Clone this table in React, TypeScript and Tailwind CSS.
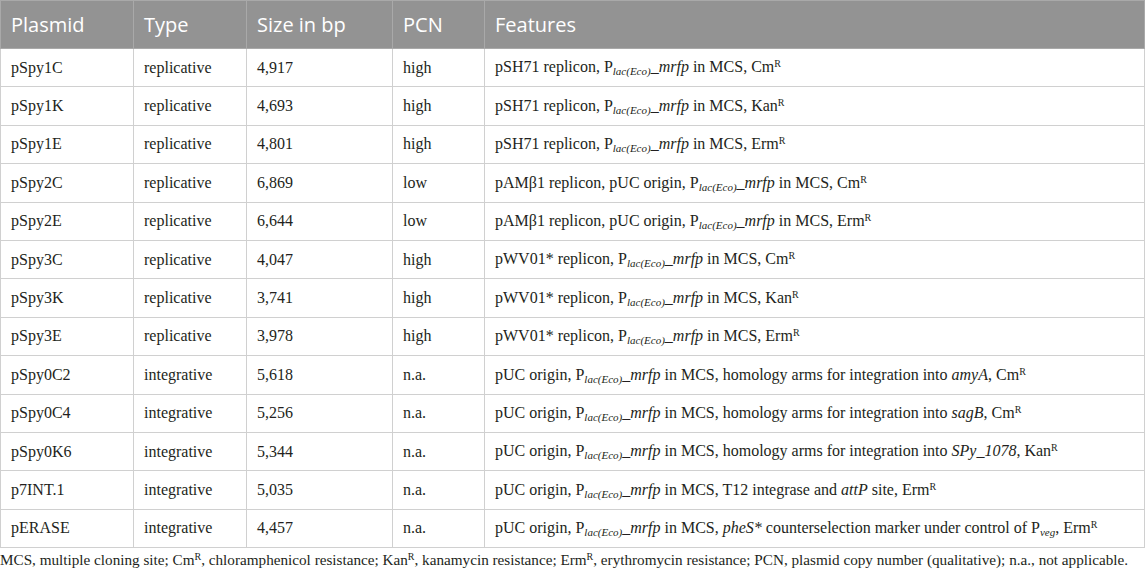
import type { ReactNode } from 'react';

type Row = { name: string; type: string; size: string; pcn: string; features: ReactNode };

// subscript / superscript as plain spans so preflight's sub/sup offsets don't apply
const Sub = ({ children }: { children: ReactNode }) => (
  <span className="italic text-[11px] align-[-3px]">{children}</span>
);

const P = () => (
  <>
    P<Sub>lac(Eco)</Sub>
    <i>_mrfp</i>
  </>
);

const R = ({ n }: { n: string }) => (
  <>
    {n}
    <span className="text-[10px] align-[5px] leading-none">R</span>
  </>
);

const ROWS: Row[] = [
  { name: 'pSpy1C', type: 'replicative', size: '4,917', pcn: 'high', features: <>pSH71 replicon, <P /> in MCS, <R n="Cm" /></> },
  { name: 'pSpy1K', type: 'replicative', size: '4,693', pcn: 'high', features: <>pSH71 replicon, <P /> in MCS, <R n="Kan" /></> },
  { name: 'pSpy1E', type: 'replicative', size: '4,801', pcn: 'high', features: <>pSH71 replicon, <P /> in MCS, <R n="Erm" /></> },
  { name: 'pSpy2C', type: 'replicative', size: '6,869', pcn: 'low', features: <>pAMβ1 replicon, pUC origin, <P /> in MCS, <R n="Cm" /></> },
  { name: 'pSpy2E', type: 'replicative', size: '6,644', pcn: 'low', features: <>pAMβ1 replicon, pUC origin, <P /> in MCS, <R n="Erm" /></> },
  { name: 'pSpy3C', type: 'replicative', size: '4,047', pcn: 'high', features: <>pWV01* replicon, <P /> in MCS, <R n="Cm" /></> },
  { name: 'pSpy3K', type: 'replicative', size: '3,741', pcn: 'high', features: <>pWV01* replicon, <P /> in MCS, <R n="Kan" /></> },
  { name: 'pSpy3E', type: 'replicative', size: '3,978', pcn: 'high', features: <>pWV01* replicon, <P /> in MCS, <R n="Erm" /></> },
  { name: 'pSpy0C2', type: 'integrative', size: '5,618', pcn: 'n.a.', features: <>pUC origin, <P /> in MCS, homology arms for integration into <i>amyA</i>, <R n="Cm" /></> },
  { name: 'pSpy0C4', type: 'integrative', size: '5,256', pcn: 'n.a.', features: <>pUC origin, <P /> in MCS, homology arms for integration into <i>sagB</i>, <R n="Cm" /></> },
  { name: 'pSpy0K6', type: 'integrative', size: '5,344', pcn: 'n.a.', features: <>pUC origin, <P /> in MCS, homology arms for integration into <i>SPy_1078</i>, <R n="Kan" /></> },
  { name: 'p7INT.1', type: 'integrative', size: '5,035', pcn: 'n.a.', features: <>pUC origin, <P /> in MCS, T12 integrase and <i>attP</i> site, <R n="Erm" /></> },
  { name: 'pERASE', type: 'integrative', size: '4,457', pcn: 'n.a.', features: <>pUC origin, <P /> in MCS, <i>pheS*</i> counterselection marker under control of P<Sub>veg</Sub>, <R n="Erm" /></> },
];

const HEAD = ['Plasmid', 'Type', 'Size in bp', 'PCN', 'Features'];
const WIDTHS = ['w-[133px]', 'w-[113px]', 'w-[146px]', 'w-[92px]', ''];

const cell = 'border border-[#d0d0d0] px-[10px] font-[Liberation_Serif,Times_New_Roman,serif] text-[16px] text-[#231f20]';

export default function App() {
  return (
    <div className="w-[1145px] h-[573px] bg-white overflow-hidden">
      <table className="w-[1145px] border-collapse table-fixed">
        <thead>
          <tr className="h-[48px] bg-[#939393]">
            {HEAD.map((h, i) => (
              <th key={h}
                className={`${WIDTHS[i]} border border-[#a9a9a9] px-[10px] text-left font-normal text-white text-[20px] font-[Open_Sans,sans-serif]`}>
                {h}
              </th>
            ))}
          </tr>
        </thead>
        <tbody>
          {ROWS.map(r => (
            <tr key={r.name} className="h-[38.4px]">
              <td className={cell}>{r.name}</td>
              <td className={cell}>{r.type}</td>
              <td className={cell}>{r.size}</td>
              <td className={cell}>{r.pcn}</td>
              <td className={`${cell} whitespace-nowrap`}>{r.features}</td>
            </tr>
          ))}
        </tbody>
      </table>
      <p className="mt-[1px] font-[Liberation_Serif,Times_New_Roman,serif] text-[15.2px] text-[#231f20] whitespace-nowrap">
        MCS, multiple cloning site; <R n="Cm" />, chloramphenicol resistance; <R n="Kan" />, kanamycin resistance; <R n="Erm" />, erythromycin resistance; PCN, plasmid copy number (qualitative); n.a., not applicable.
      </p>
    </div>
  );
}
